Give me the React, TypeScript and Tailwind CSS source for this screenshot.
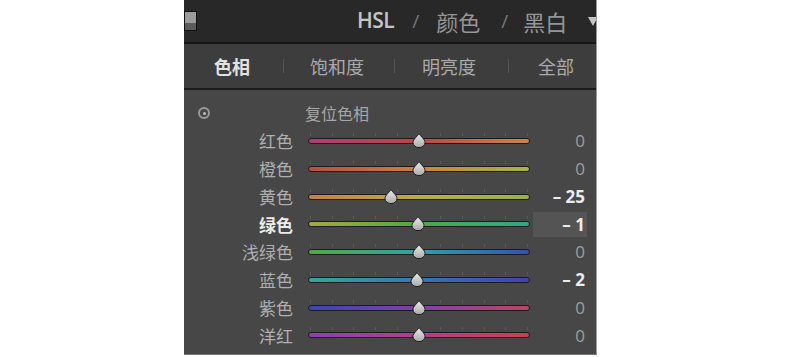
import React from "react";

type Row = {
  label: string;
  value: string;
  pos: number; // -100..100
  from: string;
  via: string;
  to: string;
  active?: boolean;
  strong?: boolean;
};

const rows: Row[] = [
  { label: "红色", value: "0", pos: 0, from: "#b23b78", via: "#c04448", to: "#c98552" },
  { label: "橙色", value: "0", pos: 0, from: "#c04a44", via: "#c8843e", to: "#a8b448" },
  { label: "黄色", value: "– 25", pos: -25, from: "#c6823e", via: "#b8ae3e", to: "#98b444", strong: true },
  { label: "绿色", value: "– 1", pos: -1, from: "#a8aa3c", via: "#4ea848", to: "#2ea88a", active: true, strong: true },
  { label: "浅绿色", value: "0", pos: 0, from: "#52a846", via: "#30a2a6", to: "#3450b4" },
  { label: "蓝色", value: "– 2", pos: -2, from: "#34a896", via: "#3476b4", to: "#4440b6", strong: true },
  { label: "紫色", value: "0", pos: 0, from: "#3c44b8", via: "#8040aa", to: "#c44264" },
  { label: "洋红", value: "0", pos: 0, from: "#8a40b4", via: "#b43e8c", to: "#c44250" },
];

const cjk = { fontFamily: '"Noto Sans CJK SC", "Noto Sans", sans-serif' };
const latin = { fontFamily: '"Open Sans", sans-serif' };

function Thumb() {
  return (
    <svg width="16" height="17" viewBox="0 0 16 17" className="block">
      <defs>
        <linearGradient id="thumbFill" x1="0" y1="0" x2="0" y2="1">
          <stop offset="0" stopColor="#ececec" />
          <stop offset="1" stopColor="#a9a9a9" />
        </linearGradient>
      </defs>
      <path
        d="M8 1.5 C9.6 4.6 14 7 14 10.6 A6 5 0 0 1 2 10.6 C2 7 6.4 4.6 8 1.5Z"
        fill="url(#thumbFill)"
        stroke="#1e1e1e"
        strokeWidth="1"
      />
    </svg>
  );
}

function Slider({ row }: { row: Row }) {
  const left = ((row.pos + 100) / 200) * 222;
  return (
    <div className="relative w-[222px] h-[28px] flex items-center">
      {/* tick marks */}
      <div className="absolute left-0 right-0 top-[6px] flex justify-between px-[2px]">
        {Array.from({ length: 11 }).map((_, i) => (
          <div key={i} className="w-px h-[3px] bg-[#5a5a5a]" />
        ))}
      </div>
      <div
        className="w-full h-[6px] rounded-full border border-[#1c1c1c]"
        style={{ background: `linear-gradient(to right, ${row.from}, ${row.via}, ${row.to})` }}
      />
      <div className="absolute top-[5px]" style={{ left: left - 8 }}>
        <Thumb />
      </div>
    </div>
  );
}

export default function App() {
  return (
    <div className="w-[802px] h-[357px] bg-white flex overflow-hidden">
      <div className="ml-[184px] w-[413px] h-[355px] flex flex-col overflow-hidden border-r border-[#9a9a9a] border-b border-b-[#777]">
        {/* Header */}
        <div className="h-[42px] bg-[#282828] flex items-center shrink-0">
          <div className="shrink-0 w-[13px] h-[20px] border border-[#111] flex flex-col">
            <div className="h-[11px] bg-[#9c9c9c]" />
            <div className="flex-1 bg-[#5c5c5c]" />
          </div>
          <div className="shrink-0 ml-[160px] flex items-center whitespace-nowrap">
            <span className="text-[21px] font-semibold tracking-[-0.5px] text-[#c4c4c4]" style={latin}>
              HSL
            </span>
            <span className="ml-[18px] text-[19px] text-[#777]" style={latin}>
              /
            </span>
            <span className="ml-[17px] text-[22px] text-[#969696]" style={cjk}>
              颜色
            </span>
            <span className="ml-[21px] text-[19px] text-[#777]" style={latin}>
              /
            </span>
            <span className="ml-[15px] text-[22px] text-[#969696]" style={cjk}>
              黑白
            </span>
            <svg width="10" height="9" viewBox="0 0 10 9" className="ml-[21px] shrink-0">
              <path d="M0 0 L10 0 L5 9Z" fill="#c4c4c4" />
            </svg>
          </div>
        </div>
        <div className="h-[2px] bg-[#161616] shrink-0" />

        {/* Tabs */}
        <div className="h-[44px] bg-[#3d3d3d] flex items-center shrink-0 whitespace-nowrap" style={cjk}>
          <span className="ml-[30px] text-[18px] font-bold text-[#e2e2e2]">色相</span>
          <span className="ml-[33px] w-px h-[14px] bg-[#555]" />
          <span className="ml-[26px] text-[18px] text-[#aaaaaa]">饱和度</span>
          <span className="ml-[30px] w-px h-[14px] bg-[#555]" />
          <span className="ml-[27px] text-[18px] text-[#aaaaaa]">明亮度</span>
          <span className="ml-[32px] w-px h-[14px] bg-[#555]" />
          <span className="ml-[29px] text-[18px] text-[#aaaaaa]">全部</span>
        </div>
        <div className="h-[2px] bg-[#1c1c1c] shrink-0" />

        {/* Body */}
        <div className="flex-1 bg-[#474747] pt-[9px]" style={cjk}>
          <div className="h-[28px] flex items-center">
            <div className="ml-[14px] w-[12px] h-[12px] rounded-full border-2 border-[#9a9a9a] flex items-center justify-center">
              <div className="w-[3px] h-[3px] rounded-full bg-[#bdbdbd]" />
            </div>
            <span className="ml-[95px] text-[16px] text-[#a6a6a6]">复位色相</span>
          </div>
          {rows.map((row) => (
            <div key={row.label} className="h-[27.8px] flex items-center">
              <div
                className={`w-[109px] text-right text-[17px] ${row.active ? "text-[#ececec] font-semibold" : "text-[#afafaf]"}`}
              >
                {row.label}
              </div>
              <div className="ml-[15px]">
                <Slider row={row} />
              </div>
              <div
                className={`ml-[3px] w-[54px] h-[25px] flex items-center justify-end pr-[2px] ${row.active ? "bg-[#545454]" : ""}`}
              >
                <span
                  className={`text-[17px] ${row.strong ? "font-bold text-[#ececec]" : "text-[#9e9e9e]"}`}
                  style={latin}
                >
                  {row.value}
                </span>
              </div>
            </div>
          ))}
        </div>
      </div>
    </div>
  );
}
